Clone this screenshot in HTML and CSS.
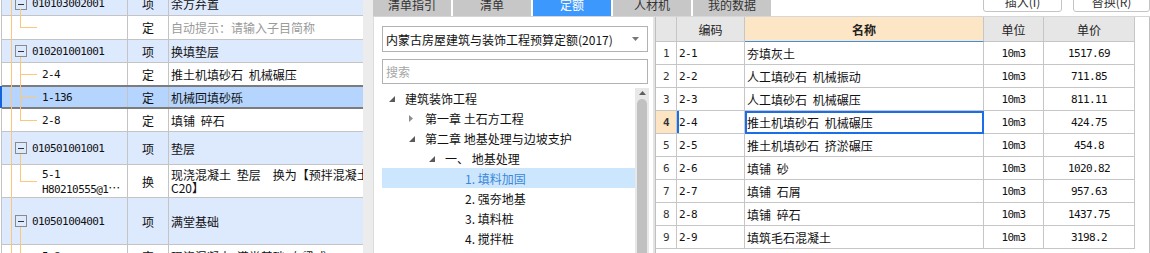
FILE: index.html
```html
<!DOCTYPE html>
<html lang="zh-CN">
<head>
    <meta charset="UTF-8">
    <meta name="viewport" content="width=device-width, initial-scale=1.0">
    <title>定额库</title>
    <link rel="stylesheet" href="styles.css">
</head>
<body>
    <!-- 左侧：清单/定额列表 -->
    <div class="bill">
        <div class="rows">
            <div class="row blue first">
                <div class="cell code"><span class="box"></span><span class="num">010103002001</span></div>
                <div class="cell type">项</div>
                <div class="cell name">余方弃置</div>
            </div>
            <div class="row first">
                <div class="cell code child"></div>
                <div class="cell type">定</div>
                <div class="cell name hint">自动提示：请输入子目简称</div>
            </div>
            <div class="row blue">
                <div class="cell code"><span class="box"></span><span class="num">010201001001</span></div>
                <div class="cell type">项</div>
                <div class="cell name">换填垫层</div>
            </div>
            <div class="row">
                <div class="cell code child"><span class="num">2-4</span></div>
                <div class="cell type">定</div>
                <div class="cell name">推土机填砂石 机械碾压</div>
            </div>
            <div class="row sel">
                <div class="cell code child"><span class="num">1-136</span></div>
                <div class="cell type">定</div>
                <div class="cell name">机械回填砂砾</div>
            </div>
            <div class="row">
                <div class="cell code child"><span class="num">2-8</span></div>
                <div class="cell type">定</div>
                <div class="cell name">填铺 碎石</div>
            </div>
            <div class="row blue tall">
                <div class="cell code"><span class="box"></span><span class="num">010501001001</span></div>
                <div class="cell type">项</div>
                <div class="cell name">垫层</div>
            </div>
            <div class="row tall">
                <div class="cell code child"><div class="two"><span class="num">5-1</span><br><span class="num">H80210555@1</span><span class="cjk">…</span></div></div>
                <div class="cell type">换</div>
                <div class="cell name"><div class="two">现浇混凝土 垫层　换为【预拌混凝土<br>C20】</div></div>
            </div>
            <div class="row blue xtall">
                <div class="cell code"><span class="box"></span><span class="num">010501004001</span></div>
                <div class="cell type">项</div>
                <div class="cell name">满堂基础</div>
            </div>
            <div class="row">
                <div class="cell code child"><span class="num">5-8</span></div>
                <div class="cell type">定</div>
                <div class="cell name">现浇混凝土 满堂基础 有梁式</div>
            </div>
        </div>
        <svg class="tree-lines" width="363" height="253">
            <path d="M11.5 0V253 M20.5 9V27.5H37 M20.5 57V120.5H37 M20.5 74.5H37 M20.5 97.5H37 M20.5 154V181.5H37 M20.5 227V253"/>
        </svg>
    </div>

    <div class="split"></div>

    <div class="main">
        <div class="topbar">
            <div class="tabs">
                <div class="tab">清单指引</div>
                <div class="tab">清单</div>
                <div class="tab active">定额</div>
                <div class="tab">人材机</div>
                <div class="tab">我的数据</div>
            </div>
            <div class="actions">
                <div class="btn">插入(I)</div>
                <div class="btn last">替换(R)</div>
            </div>
        </div>

        <div class="body">
            <!-- 定额库目录 -->
            <div class="lib">
                <div class="select">
                    <span>内蒙古房屋建筑与装饰工程预算定额(2017)</span>
                    <svg class="caret" width="7" height="4"><polygon points="0,0 7,0 3.5,4"/></svg>
                </div>
                <div class="search">搜索</div>
                <div class="tree-wrap">
                    <div class="tree">
                        <div class="node l0"><svg class="tog open" width="10" height="10"><polygon points="6,3 6,9 0,9"/></svg>建筑装饰工程</div>
                        <div class="node l1"><svg class="tog shut" width="10" height="10"><polygon points="0,2 4,5.5 0,9"/></svg>第一章 土石方工程</div>
                        <div class="node l1"><svg class="tog open" width="10" height="10"><polygon points="6,3 6,9 0,9"/></svg>第二章 地基处理与边坡支护</div>
                        <div class="node l2"><svg class="tog open" width="10" height="10"><polygon points="6,3 6,9 0,9"/></svg>一、 地基处理</div>
                        <div class="node l3 active"><span class="tog"></span>1. 填料加固</div>
                        <div class="node l3"><span class="tog"></span>2. 强夯地基</div>
                        <div class="node l3"><span class="tog"></span>3. 填料桩</div>
                        <div class="node l3"><span class="tog"></span>4. 搅拌桩</div>
                    </div>
                    <div class="vscroll">
                        <svg class="up" width="7" height="4"><polygon points="3.5,0 7,4 0,4"/></svg>
                        <div class="thumb"></div>
                    </div>
                </div>
            </div>

            <div class="divider"></div>

            <!-- 定额子目表 -->
            <div class="list">
                <div class="qtable">
                    <div class="hd"></div>
                    <div class="hd">编码</div>
                    <div class="hd key">名称</div>
                    <div class="hd">单位</div>
                    <div class="hd">单价</div>

                    <div class="rn num">1</div><div class="cd num">2-1</div><div class="nm">夯填灰土</div><div class="ct num">10m3</div><div class="ct num">1517.69</div>
                    <div class="rn num">2</div><div class="cd num">2-2</div><div class="nm">人工填砂石 机械振动</div><div class="ct num">10m3</div><div class="ct num">711.85</div>
                    <div class="rn num">3</div><div class="cd num">2-3</div><div class="nm">人工填砂石 机械碾压</div><div class="ct num">10m3</div><div class="ct num">811.11</div>
                    <div class="rn num cur">4</div><div class="cd num cur">2-4</div><div class="nm cur">推土机填砂石 机械碾压</div><div class="ct num">10m3</div><div class="ct num">424.75</div>
                    <div class="rn num">5</div><div class="cd num">2-5</div><div class="nm">推土机填砂石 挤淤碾压</div><div class="ct num">10m3</div><div class="ct num">454.8</div>
                    <div class="rn num">6</div><div class="cd num">2-6</div><div class="nm">填铺 砂</div><div class="ct num">10m3</div><div class="ct num">1020.82</div>
                    <div class="rn num">7</div><div class="cd num">2-7</div><div class="nm">填铺 石屑</div><div class="ct num">10m3</div><div class="ct num">957.63</div>
                    <div class="rn num">8</div><div class="cd num">2-8</div><div class="nm">填铺 碎石</div><div class="ct num">10m3</div><div class="ct num">1437.75</div>
                    <div class="rn num">9</div><div class="cd num">2-9</div><div class="nm">填筑毛石混凝土</div><div class="ct num">10m3</div><div class="ct num">3198.2</div>
                </div>
            </div>
        </div>
    </div>
</body>
</html>
```

FILE: styles.css
```css
* {
    box-sizing: border-box;
}
html, body {
    margin: 0;
}
body {
    width: 1150px;
    height: 253px;
    overflow: hidden;
    display: flex;
    background: #fff;
    color: #111;
    font-family: "Noto Sans CJK SC", sans-serif;
    font-size: 12px;
}
.num {
    font-family: "DejaVu Sans Mono", monospace;
    font-size: 11px;
    letter-spacing: -0.6px;
}
.cjk {
    font-family: "Noto Sans CJK SC", sans-serif;
    font-size: 12px;
}

/* left list */
.bill {
    width: 363px;
    flex: none;
    position: relative;
    overflow: hidden;
}
.rows {
    margin: -8px 0 0 1px;
    border-left: 1px solid #c4c4c4;
}
.row {
    position: relative;
    display: grid;
    grid-template-columns: 126px 41px 1fr;
    height: 23px;
    border-bottom: 1px solid #c4c4c4;
}
.row.first {
    height: 24px;
}
.row.tall {
    height: 33px;
}
.row.xtall {
    height: 47px;
}
.row.blue {
    background: #dde9fd;
}
.row.sel {
    background: #b6d5fe;
}
.row.sel::before {
    content: "";
    position: absolute;
    left: -2px;
    top: 0;
    bottom: 0;
    width: 2px;
    background: #1463d9;
}
.row.sel::after {
    content: "";
    position: absolute;
    left: 0;
    right: 0;
    top: -1px;
    bottom: -1px;
    border-top: 2px solid #7c7c7c;
    border-bottom: 2px solid #7c7c7c;
}
.cell {
    display: flex;
    align-items: center;
    white-space: nowrap;
    overflow: hidden;
    border-right: 1px solid #c4c4c4;
}
.cell.code {
    padding-left: 13px;
}
.cell.code.child {
    padding-left: 40px;
}
.cell.type {
    justify-content: center;
}
.cell.name {
    padding-left: 2px;
    border-right: none;
    word-spacing: 3px;
}
.cell.hint {
    color: #9a9a9a;
}
.two {
    line-height: 13px;
}
.box {
    position: relative;
    width: 12px;
    height: 12px;
    margin-right: 5px;
    border: 1px solid #8a8a8a;
    flex: none;
}
.box::after {
    content: "";
    position: absolute;
    left: 2px;
    right: 2px;
    top: 5px;
    height: 1px;
    background: #333;
}
.tree-lines {
    position: absolute;
    left: 0;
    top: 0;
    pointer-events: none;
}
.tree-lines path {
    fill: none;
    stroke: #fcc77a;
    stroke-width: 1;
    shape-rendering: crispEdges;
}

.split {
    width: 10px;
    flex: none;
    background: #ececec;
}

/* right side */
.main {
    flex: 1;
    min-width: 0;
    display: flex;
    flex-direction: column;
}
.topbar {
    height: 17px;
    flex: none;
    display: flex;
    border-bottom: 1px solid #d6d6d6;
}
.tabs {
    display: flex;
    gap: 2px;
}
.tab {
    width: 78px;
    height: 24px;
    margin-top: -8px;
    display: flex;
    align-items: center;
    justify-content: center;
    background: #c7c7c7;
    color: #333;
}
.tab.active {
    background: #3d98fe;
    color: #fff;
}
.actions {
    margin-left: auto;
    display: flex;
    gap: 11px;
}
.btn {
    width: 79px;
    height: 22px;
    margin-top: -10px;
    display: flex;
    align-items: center;
    justify-content: center;
    border: 1px solid #c4c4c4;
    border-radius: 3px;
    background: #fff;
    color: #333;
}
.btn.last {
    width: 77px;
}
.body {
    flex: 1;
    display: flex;
    min-height: 0;
}
.lib {
    width: 280px;
    flex: none;
    padding: 9px 0 0 8px;
    border-left: 1px solid #dcdcdc;
    overflow: hidden;
}
.select {
    width: 266px;
    height: 26px;
    display: flex;
    align-items: center;
    padding-left: 3px;
    border: 1px solid #b2b2b2;
    white-space: nowrap;
}
.caret {
    margin-left: auto;
    margin-right: 8px;
    fill: #777;
}
.search {
    width: 266px;
    height: 25px;
    margin-top: 7px;
    display: flex;
    align-items: center;
    padding-left: 3px;
    border: 1px solid #b2b2b2;
    color: #a6a6a6;
}
.tree-wrap {
    margin-top: 4px;
    height: 170px;
    display: flex;
}
.tree {
    width: 253px;
}
.node {
    height: 20px;
    display: flex;
    align-items: center;
    white-space: nowrap;
}
.node.l0 { padding-left: 7px; }
.node.l1 { padding-left: 27px; }
.node.l2 { padding-left: 47px; }
.node.l3 { padding-left: 67px; }
.node.active {
    background: #cce6fd;
    color: #3a86da;
}
.tog {
    width: 10px;
    height: 10px;
    margin-right: 6px;
    flex: none;
}
.tog.open {
    fill: #5a5a5a;
}
.tog.shut {
    fill: #8e8e8e;
}
.vscroll {
    width: 14px;
    display: flex;
    flex-direction: column;
    align-items: center;
    background: #e8e8e8;
}
.up {
    margin-top: 3px;
    fill: #5e5e5e;
}
.thumb {
    width: 10px;
    flex: 1;
    margin-top: 4px;
    border-radius: 5px 5px 0 0;
    background: #c1c1c1;
}
.divider {
    width: 2px;
    flex: none;
    background: #e4e4e4;
}
.list {
    flex: 1;
    border-left: 1px solid #bfbfbf;
    border-right: 1px solid #bfbfbf;
}
.qtable {
    display: grid;
    grid-template-columns: 21px 68px 239px 60px 91px;
    grid-template-rows: 25px repeat(9, 23px);
    color: #111;
}
.qtable > div {
    display: flex;
    align-items: center;
    white-space: nowrap;
    overflow: hidden;
    border-right: 1px solid #c6c6c6;
    border-bottom: 1px solid #c6c6c6;
}
.qtable .hd {
    justify-content: center;
    background: #e6e6e6;
    color: #222;
}
.qtable .hd.key {
    background: #fde6c6;
    font-weight: bold;
    border-bottom-color: #3d8ee6;
}
.qtable .rn {
    justify-content: center;
    color: #333;
}
.qtable .rn.cur {
    background: #fde4c2;
    font-weight: bold;
}
.qtable .cd {
    padding-left: 2px;
}
.qtable .cd.cur {
    box-shadow: inset 2px 0 #1a6fe6;
}
.qtable .nm {
    padding-left: 2px;
    word-spacing: 3px;
}
.qtable .nm.cur {
    outline: 2px solid #1a6ee8;
    outline-offset: -2px;
}
.qtable .ct {
    justify-content: center;
}
```
